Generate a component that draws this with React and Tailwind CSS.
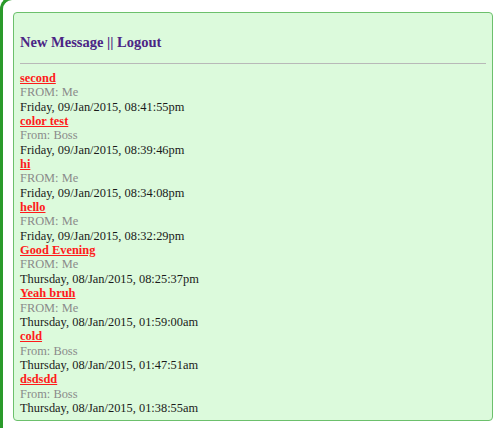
const messages = [
  { subject: 'second', from: 'FROM: Me', date: 'Friday, 09/Jan/2015, 08:41:55pm' },
  { subject: 'color test', from: 'From: Boss', date: 'Friday, 09/Jan/2015, 08:39:46pm' },
  { subject: 'hi', from: 'FROM: Me', date: 'Friday, 09/Jan/2015, 08:34:08pm' },
  { subject: 'hello', from: 'FROM: Me', date: 'Friday, 09/Jan/2015, 08:32:29pm' },
  { subject: 'Good Evening', from: 'FROM: Me', date: 'Thursday, 08/Jan/2015, 08:25:37pm' },
  { subject: 'Yeah bruh', from: 'FROM: Me', date: 'Thursday, 08/Jan/2015, 01:59:00am' },
  { subject: 'cold', from: 'From: Boss', date: 'Thursday, 08/Jan/2015, 01:47:51am' },
  { subject: 'dsdsdd', from: 'From: Boss', date: 'Thursday, 08/Jan/2015, 01:38:55am' },
];

export default function App() {
  return (
    <div className="h-[428px] overflow-hidden bg-white font-['Liberation_Serif',serif]">
      {/* outer frame: only the left edge and top-left corner show */}
      <div className="-mt-[3px] h-[440px] border-l-[3px] border-t-[3px] border-[#2a9a2a] rounded-tl-[12px] pl-[10px] pt-[12px] pr-[7px]">
        <div className="h-[409px] border border-[#6cc06c] rounded-[4px] bg-[#dcfadc] px-[6px] pt-[17px]">
          <h2 className="text-[14.5px] leading-[24px] font-bold text-[#4b2585]">
            <a href="#">New Message</a> || <a href="#">Logout</a>
          </h2>
          <hr className="mt-[9px] mb-[7px] border-t-[1px] border-[#b8b8b8]" />
          <div className="text-[12.4px] leading-[14.35px]">
            {messages.map((m) => (
              <div key={m.date}>
                <a href="#" className="font-bold text-[#ff1a1a] underline block w-max">{m.subject}</a>
                <div className="text-[#8a8a8a]">{m.from}</div>
                <div className="text-[#1a1a1a]">{m.date}</div>
              </div>
            ))}
          </div>
        </div>
      </div>
    </div>
  );
}
